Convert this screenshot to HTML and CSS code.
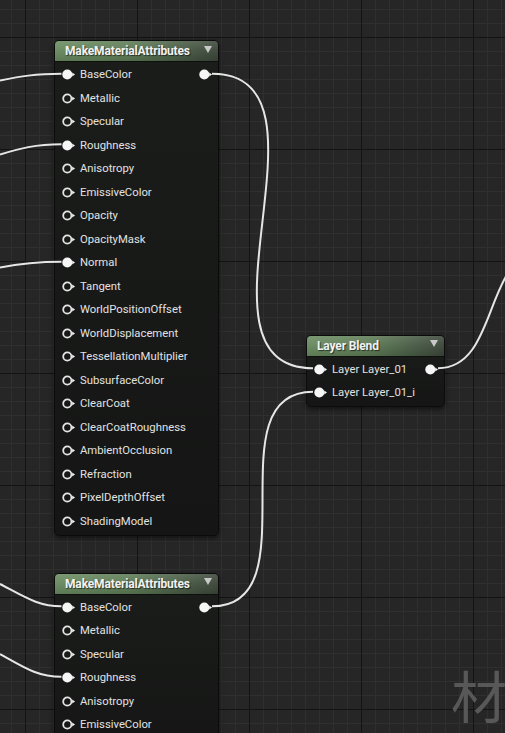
FILE: index.html
```html
<!DOCTYPE html>
<html>
<head>
<meta charset="utf-8">
<link rel="stylesheet" href="styles.css">
</head>
<body>
<div class="canvas">
  <div class="node node-a">
    <div class="node-header"><span class="title">MakeMaterialAttributes</span><span class="caret"></span></div>
    <div class="node-body">
      <div class="pin-row"><svg class="pin" viewBox="0 0 14 11"><circle cx="5.3" cy="5.5" r="5" class="fill"/><path d="M10.2 3.6 L13 5.5 L10.2 7.4 Z" class="fill"/></svg><span class="label">BaseColor</span><svg class="pin out" viewBox="0 0 14 11"><circle cx="5.3" cy="5.5" r="5" class="fill"/><path d="M10.2 3.6 L13 5.5 L10.2 7.4 Z" class="fill"/></svg></div>
      <div class="pin-row"><svg class="pin" viewBox="0 0 14 11"><circle cx="5.3" cy="5.5" r="4.1" class="ring"/><path d="M10.2 3.6 L13 5.5 L10.2 7.4 Z" class="fill"/></svg><span class="label">Metallic</span></div>
      <div class="pin-row"><svg class="pin" viewBox="0 0 14 11"><circle cx="5.3" cy="5.5" r="4.1" class="ring"/><path d="M10.2 3.6 L13 5.5 L10.2 7.4 Z" class="fill"/></svg><span class="label">Specular</span></div>
      <div class="pin-row"><svg class="pin" viewBox="0 0 14 11"><circle cx="5.3" cy="5.5" r="5" class="fill"/><path d="M10.2 3.6 L13 5.5 L10.2 7.4 Z" class="fill"/></svg><span class="label">Roughness</span></div>
      <div class="pin-row"><svg class="pin" viewBox="0 0 14 11"><circle cx="5.3" cy="5.5" r="4.1" class="ring"/><path d="M10.2 3.6 L13 5.5 L10.2 7.4 Z" class="fill"/></svg><span class="label">Anisotropy</span></div>
      <div class="pin-row"><svg class="pin" viewBox="0 0 14 11"><circle cx="5.3" cy="5.5" r="4.1" class="ring"/><path d="M10.2 3.6 L13 5.5 L10.2 7.4 Z" class="fill"/></svg><span class="label">EmissiveColor</span></div>
      <div class="pin-row"><svg class="pin" viewBox="0 0 14 11"><circle cx="5.3" cy="5.5" r="4.1" class="ring"/><path d="M10.2 3.6 L13 5.5 L10.2 7.4 Z" class="fill"/></svg><span class="label">Opacity</span></div>
      <div class="pin-row"><svg class="pin" viewBox="0 0 14 11"><circle cx="5.3" cy="5.5" r="4.1" class="ring"/><path d="M10.2 3.6 L13 5.5 L10.2 7.4 Z" class="fill"/></svg><span class="label">OpacityMask</span></div>
      <div class="pin-row"><svg class="pin" viewBox="0 0 14 11"><circle cx="5.3" cy="5.5" r="5" class="fill"/><path d="M10.2 3.6 L13 5.5 L10.2 7.4 Z" class="fill"/></svg><span class="label">Normal</span></div>
      <div class="pin-row"><svg class="pin" viewBox="0 0 14 11"><circle cx="5.3" cy="5.5" r="4.1" class="ring"/><path d="M10.2 3.6 L13 5.5 L10.2 7.4 Z" class="fill"/></svg><span class="label">Tangent</span></div>
      <div class="pin-row"><svg class="pin" viewBox="0 0 14 11"><circle cx="5.3" cy="5.5" r="4.1" class="ring"/><path d="M10.2 3.6 L13 5.5 L10.2 7.4 Z" class="fill"/></svg><span class="label">WorldPositionOffset</span></div>
      <div class="pin-row"><svg class="pin" viewBox="0 0 14 11"><circle cx="5.3" cy="5.5" r="4.1" class="ring"/><path d="M10.2 3.6 L13 5.5 L10.2 7.4 Z" class="fill"/></svg><span class="label">WorldDisplacement</span></div>
      <div class="pin-row"><svg class="pin" viewBox="0 0 14 11"><circle cx="5.3" cy="5.5" r="4.1" class="ring"/><path d="M10.2 3.6 L13 5.5 L10.2 7.4 Z" class="fill"/></svg><span class="label">TessellationMultiplier</span></div>
      <div class="pin-row"><svg class="pin" viewBox="0 0 14 11"><circle cx="5.3" cy="5.5" r="4.1" class="ring"/><path d="M10.2 3.6 L13 5.5 L10.2 7.4 Z" class="fill"/></svg><span class="label">SubsurfaceColor</span></div>
      <div class="pin-row"><svg class="pin" viewBox="0 0 14 11"><circle cx="5.3" cy="5.5" r="4.1" class="ring"/><path d="M10.2 3.6 L13 5.5 L10.2 7.4 Z" class="fill"/></svg><span class="label">ClearCoat</span></div>
      <div class="pin-row"><svg class="pin" viewBox="0 0 14 11"><circle cx="5.3" cy="5.5" r="4.1" class="ring"/><path d="M10.2 3.6 L13 5.5 L10.2 7.4 Z" class="fill"/></svg><span class="label">ClearCoatRoughness</span></div>
      <div class="pin-row"><svg class="pin" viewBox="0 0 14 11"><circle cx="5.3" cy="5.5" r="4.1" class="ring"/><path d="M10.2 3.6 L13 5.5 L10.2 7.4 Z" class="fill"/></svg><span class="label">AmbientOcclusion</span></div>
      <div class="pin-row"><svg class="pin" viewBox="0 0 14 11"><circle cx="5.3" cy="5.5" r="4.1" class="ring"/><path d="M10.2 3.6 L13 5.5 L10.2 7.4 Z" class="fill"/></svg><span class="label">Refraction</span></div>
      <div class="pin-row"><svg class="pin" viewBox="0 0 14 11"><circle cx="5.3" cy="5.5" r="4.1" class="ring"/><path d="M10.2 3.6 L13 5.5 L10.2 7.4 Z" class="fill"/></svg><span class="label">PixelDepthOffset</span></div>
      <div class="pin-row"><svg class="pin" viewBox="0 0 14 11"><circle cx="5.3" cy="5.5" r="4.1" class="ring"/><path d="M10.2 3.6 L13 5.5 L10.2 7.4 Z" class="fill"/></svg><span class="label">ShadingModel</span></div>
    </div>
  </div>

  <div class="node node-b">
    <div class="node-header"><span class="title">MakeMaterialAttributes</span><span class="caret"></span></div>
    <div class="node-body">
      <div class="pin-row"><svg class="pin" viewBox="0 0 14 11"><circle cx="5.3" cy="5.5" r="5" class="fill"/><path d="M10.2 3.6 L13 5.5 L10.2 7.4 Z" class="fill"/></svg><span class="label">BaseColor</span><svg class="pin out" viewBox="0 0 14 11"><circle cx="5.3" cy="5.5" r="5" class="fill"/><path d="M10.2 3.6 L13 5.5 L10.2 7.4 Z" class="fill"/></svg></div>
      <div class="pin-row"><svg class="pin" viewBox="0 0 14 11"><circle cx="5.3" cy="5.5" r="4.1" class="ring"/><path d="M10.2 3.6 L13 5.5 L10.2 7.4 Z" class="fill"/></svg><span class="label">Metallic</span></div>
      <div class="pin-row"><svg class="pin" viewBox="0 0 14 11"><circle cx="5.3" cy="5.5" r="4.1" class="ring"/><path d="M10.2 3.6 L13 5.5 L10.2 7.4 Z" class="fill"/></svg><span class="label">Specular</span></div>
      <div class="pin-row"><svg class="pin" viewBox="0 0 14 11"><circle cx="5.3" cy="5.5" r="5" class="fill"/><path d="M10.2 3.6 L13 5.5 L10.2 7.4 Z" class="fill"/></svg><span class="label">Roughness</span></div>
      <div class="pin-row"><svg class="pin" viewBox="0 0 14 11"><circle cx="5.3" cy="5.5" r="4.1" class="ring"/><path d="M10.2 3.6 L13 5.5 L10.2 7.4 Z" class="fill"/></svg><span class="label">Anisotropy</span></div>
      <div class="pin-row"><svg class="pin" viewBox="0 0 14 11"><circle cx="5.3" cy="5.5" r="4.1" class="ring"/><path d="M10.2 3.6 L13 5.5 L10.2 7.4 Z" class="fill"/></svg><span class="label">EmissiveColor</span></div>
      <div class="pin-row"><svg class="pin" viewBox="0 0 14 11"><circle cx="5.3" cy="5.5" r="4.1" class="ring"/><path d="M10.2 3.6 L13 5.5 L10.2 7.4 Z" class="fill"/></svg><span class="label">Opacity</span></div>
    </div>
  </div>

  <div class="node node-blend">
    <div class="node-header"><span class="title">Layer Blend</span><span class="caret"></span></div>
    <div class="node-body">
      <div class="pin-row"><svg class="pin" viewBox="0 0 14 11"><circle cx="5.3" cy="5.5" r="5" class="fill"/><path d="M10.2 3.6 L13 5.5 L10.2 7.4 Z" class="fill"/></svg><span class="label">Layer Layer_01</span><svg class="pin out" viewBox="0 0 14 11"><circle cx="5.3" cy="5.5" r="5" class="fill"/><path d="M10.2 3.6 L13 5.5 L10.2 7.4 Z" class="fill"/></svg></div>
      <div class="pin-row"><svg class="pin" viewBox="0 0 14 11"><circle cx="5.3" cy="5.5" r="5" class="fill"/><path d="M10.2 3.6 L13 5.5 L10.2 7.4 Z" class="fill"/></svg><span class="label">Layer Layer_01_i</span></div>
    </div>
  </div>

  <svg class="wires" viewBox="0 0 505 733">
    <path d="M0 80.5 C20 76.5, 35 73.75, 61.5 73.75"/>
    <path d="M0 154.5 C20 148.5, 35 144.25, 61.5 144.25"/>
    <path d="M0 267.5 C20 263.5, 35 261.75, 61.5 261.75"/>
    <path d="M212 73.75 C347 73.75, 178 368.25, 313 368.25"/>
    <path d="M212 606.25 C313 606.25, 212 391.75, 313 391.75"/>
    <path d="M438 368.25 C500 368.25, 483 250, 545 250"/>
    <path d="M0 584 C25 597, 38 606.25, 61.5 606.25"/>
    <path d="M0 654 C25 668, 38 676.75, 61.5 676.75"/>
  </svg>

  <div class="watermark">材</div>
</div>
</body>
</html>
```

FILE: styles.css
```css
html, body {
  margin: 0;
  padding: 0;
  background: #262626;
}

.canvas {
  position: relative;
  width: 505px;
  height: 733px;
  overflow: hidden;
  background-color: #262626;
  background-image:
    linear-gradient(to right, #141414 1px, transparent 1px),
    linear-gradient(to bottom, #141414 1px, transparent 1px),
    linear-gradient(to right, #2f2f2f 1px, transparent 1px),
    linear-gradient(to bottom, #2f2f2f 1px, transparent 1px);
  background-size: 112px 112px, 112px 112px, 14px 14px, 14px 14px;
  background-position: 25px 37px, 25px 37px, 11px 9px, 11px 9px;
  font-family: Roboto, "Noto Sans", sans-serif;
}

.node {
  position: absolute;
  box-sizing: border-box;
  border: 1px solid #0b0b0b;
  border-radius: 5px;
  background: linear-gradient(180deg, #1b1d1b 0%, #141514 100%);
  box-shadow: 0 2px 5px rgba(0, 0, 0, 0.55);
  display: flex;
  flex-direction: column;
}

.node-a { left: 54px; top: 40px; width: 165px; }
.node-b { left: 54px; top: 572.5px; width: 165px; }
.node-blend { left: 306px; top: 334.5px; width: 139px; }

.node-header {
  height: 20px;
  display: flex;
  align-items: center;
  padding: 0 6px 0 10px;
  border-radius: 4px 4px 0 0;
  background:
    linear-gradient(180deg, rgba(255, 255, 255, 0.12) 0%, rgba(255, 255, 255, 0.03) 45%, rgba(0, 0, 0, 0.12) 100%),
    linear-gradient(90deg, #6a8b61 0%, #5e7c56 45%, #4b5f47 75%, #3c473a 100%);
  border-bottom: 1px solid #0e100e;
}

.title {
  flex: 1;
  color: #f2f2f2;
  font-size: 12px;
  font-weight: 700;
  letter-spacing: -0.15px;
  text-shadow: 1px 1px 1px rgba(0, 0, 0, 0.6);
  white-space: nowrap;
}

.caret {
  width: 0;
  height: 0;
  border-left: 4.5px solid transparent;
  border-right: 4.5px solid transparent;
  border-top: 7px solid #c9c9c9;
  margin-bottom: 4px;
}

.node-body {
  padding: 1px 0 1.5px 0;
  display: flex;
  flex-direction: column;
}

.pin-row {
  height: 23.5px;
  display: flex;
  align-items: center;
  padding: 0 5px 0 6.5px;
}

.pin {
  width: 14px;
  height: 11px;
  flex: none;
}

.pin .fill { fill: #f6f6f6; }
.pin .ring { fill: none; stroke: #e4e4e4; stroke-width: 1.8; }

.pin.out { margin-left: auto; }

.label {
  margin-left: 4.5px;
  color: #e2e2e2;
  font-size: 11.3px;
  white-space: nowrap;
}

.wires {
  position: absolute;
  left: 0;
  top: 0;
  width: 505px;
  height: 733px;
  pointer-events: none;
}

.wires path {
  fill: none;
  stroke: #e6e6e6;
  stroke-width: 2;
}

.watermark {
  position: absolute;
  left: 451px;
  top: 666px;
  font-family: "Noto Sans CJK SC", sans-serif;
  font-size: 56px;
  line-height: 1;
  color: #585858;
  pointer-events: none;
}
```
